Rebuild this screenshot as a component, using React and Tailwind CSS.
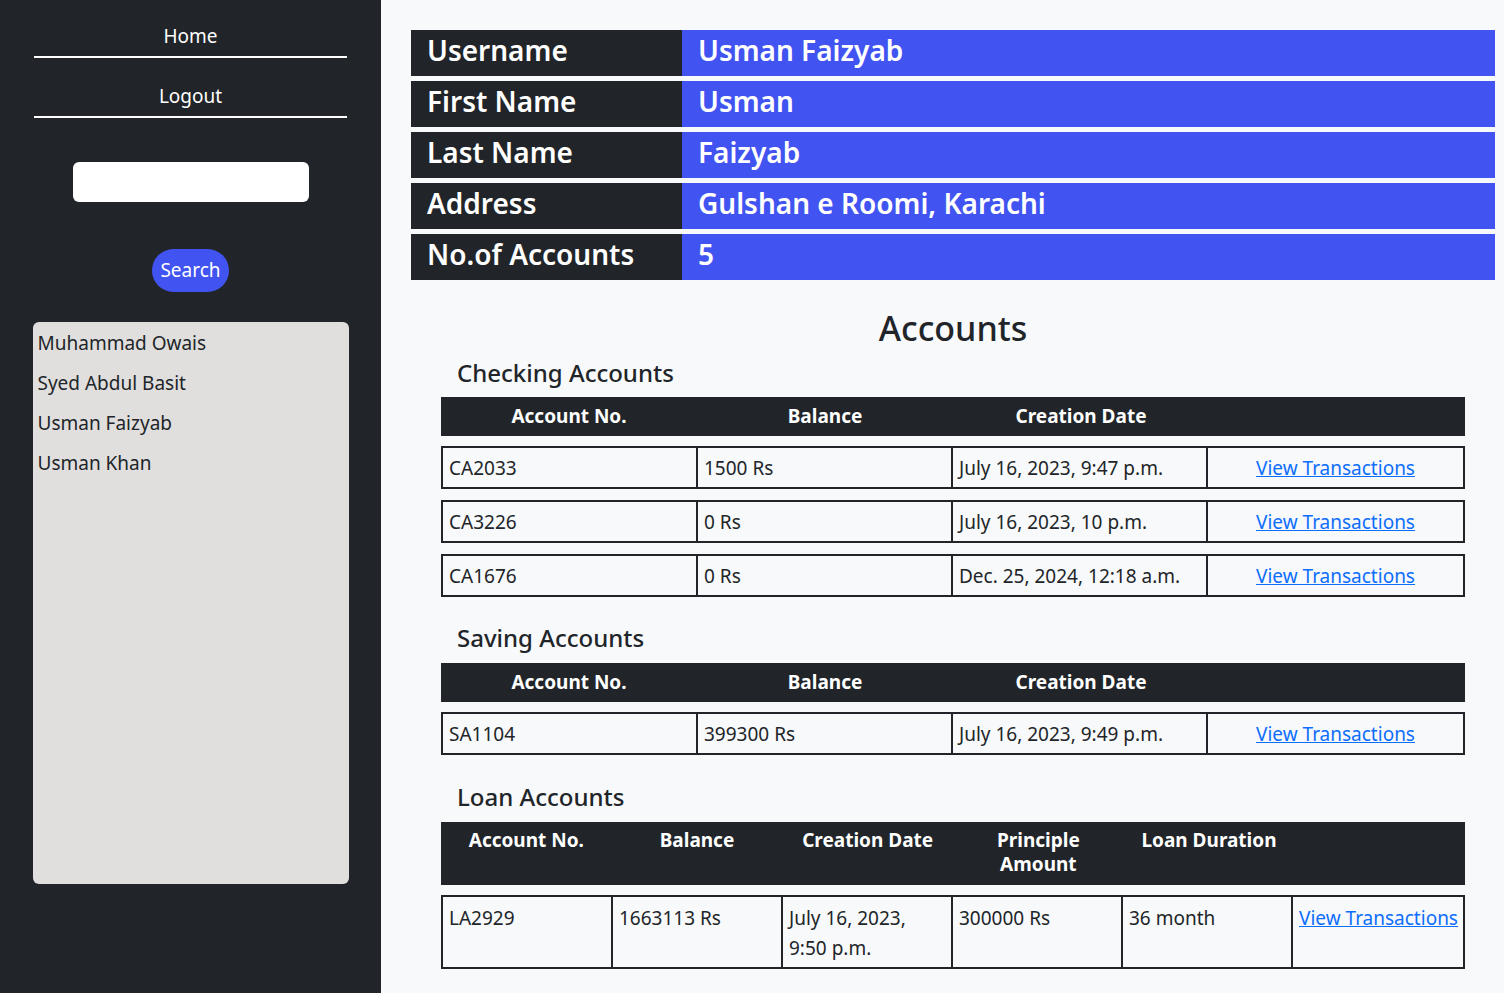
import React from "react";

const info = [
  ["Username", "Usman Faizyab"],
  ["First Name", "Usman"],
  ["Last Name", "Faizyab"],
  ["Address", "Gulshan e Roomi, Karachi"],
  ["No.of Accounts", "5"],
];

const checking = [
  ["CA2033", "1500 Rs", "July 16, 2023, 9:47 p.m."],
  ["CA3226", "0 Rs", "July 16, 2023, 10 p.m."],
  ["CA1676", "0 Rs", "Dec. 25, 2024, 12:18 a.m."],
];

const saving = [["SA1104", "399300 Rs", "July 16, 2023, 9:49 p.m."]];

function Header4() {
  return (
    <div className="grid grid-cols-4 bg-[#212529] text-white font-bold text-[19px] leading-[24px] pt-[7px] pb-[8px] text-center">
      <div>Account No.</div>
      <div>Balance</div>
      <div>Creation Date</div>
      <div></div>
    </div>
  );
}

function Row4({ r, first }) {
  return (
    <div className={(first ? "mt-[10px] " : "mt-[11px] ") + "grid grid-cols-4 border-2 border-[#212529] text-[19px] leading-[30px] text-[#212529]"}>
      <div className="px-[6px] pt-[5px] pb-[4px] border-r-2 border-[#212529]">{r[0]}</div>
      <div className="px-[6px] pt-[5px] pb-[4px] border-r-2 border-[#212529]">{r[1]}</div>
      <div className="px-[6px] pt-[5px] pb-[4px] border-r-2 border-[#212529]">{r[2]}</div>
      <div className="px-[6px] pt-[5px] pb-[4px] text-center">
        <a href="#" className="text-[#0d6efd] underline">View Transactions</a>
      </div>
    </div>
  );
}

export default function App() {
  return (
    <div className="flex h-[993px] overflow-hidden font-['Noto_Sans',sans-serif]">
      <aside className="w-[381px] h-[993px] bg-[#212529] shrink-0 flex flex-col items-center">
        <a href="#" className="mt-[22px] w-[313px] text-center text-white text-[19px] leading-[28px] pb-[6px] border-b-2 border-white">Home</a>
        <a href="#" className="mt-[24px] w-[313px] text-center text-white text-[19px] leading-[28px] pb-[6px] border-b-2 border-white">Logout</a>
        <input className="mt-[44px] w-[236px] h-[40px] rounded-[6px] bg-white outline-none" />
        <button className="mt-[47px] w-[77px] h-[43px] rounded-full bg-[#4154f1] text-white text-[19px]">Search</button>
        <div className="mt-[30px] w-[316px] h-[562px] rounded-[6px] bg-[#e0dfdd] pt-[6px] px-[5px] text-[19px] text-[#212529]">
          {["Muhammad Owais", "Syed Abdul Basit", "Usman Faizyab", "Usman Khan"].map((n) => (
            <div key={n} className="leading-[30px] mb-[10px]">{n}</div>
          ))}
        </div>
      </aside>
      <main className="flex-1 bg-[#f8f9fa] pt-[30px] pl-[30px]">
        <div className="w-[1084px]">
          <div className="flex flex-col gap-[5px]">
            {info.map(([k, v]) => (
              <div key={k} className="flex h-[46px] text-white text-[28px] font-semibold">
                <div className="w-[271px] bg-[#212529] pl-[16px] flex items-center pb-[7px]">{k}</div>
                <div className="flex-1 bg-[#4154f1] pl-[16px] flex items-center pb-[7px]">{v}</div>
              </div>
            ))}
          </div>
          <h2 className="mt-[27px] text-center text-[34px] leading-[42px] font-medium text-[#212529]">Accounts</h2>
          <div className="mx-[30px]">
            <h5 className="mt-[9px] pl-[16px] text-[24px] leading-[30px] font-medium text-[#212529]">Checking Accounts</h5>
            <div className="mt-[9px]">
              <Header4 />
              {checking.map((r, i) => (
                <Row4 key={r[0]} r={r} first={i === 0} />
              ))}
            </div>
            <h5 className="mt-[26px] pl-[16px] text-[24px] leading-[30px] font-medium text-[#212529]">Saving Accounts</h5>
            <div className="mt-[10px]">
              <Header4 />
              {saving.map((r, i) => (
                <Row4 key={r[0]} r={r} first={i === 0} />
              ))}
            </div>
            <h5 className="mt-[27px] pl-[16px] text-[24px] leading-[30px] font-medium text-[#212529]">Loan Accounts</h5>
            <div className="mt-[10px]">
              <div className="grid grid-cols-6 bg-[#212529] text-white font-bold text-[19px] leading-[24px] pt-[6px] pb-[9px] text-center">
                <div>Account No.</div>
                <div>Balance</div>
                <div>Creation Date</div>
                <div className="px-[40px]">Principle Amount</div>
                <div>Loan Duration</div>
                <div></div>
              </div>
              <div className="mt-[10px] grid grid-cols-6 border-2 border-[#212529] text-[19px] leading-[30px] text-[#212529]">
                <div className="px-[6px] pt-[6px] pb-[4px] border-r-2 border-[#212529]">LA2929</div>
                <div className="px-[6px] pt-[6px] pb-[4px] border-r-2 border-[#212529]">1663113 Rs</div>
                <div className="px-[6px] pt-[6px] pb-[4px] border-r-2 border-[#212529]">July 16, 2023,<br />9:50 p.m.</div>
                <div className="px-[6px] pt-[6px] pb-[4px] border-r-2 border-[#212529]">300000 Rs</div>
                <div className="px-[6px] pt-[6px] pb-[4px] border-r-2 border-[#212529]">36 month</div>
                <div className="px-[6px] pt-[6px] pb-[4px]">
                  <a href="#" className="text-[#0d6efd] underline whitespace-nowrap">View Transactions</a>
                </div>
              </div>
            </div>
          </div>
        </div>
      </main>
    </div>
  );
}
